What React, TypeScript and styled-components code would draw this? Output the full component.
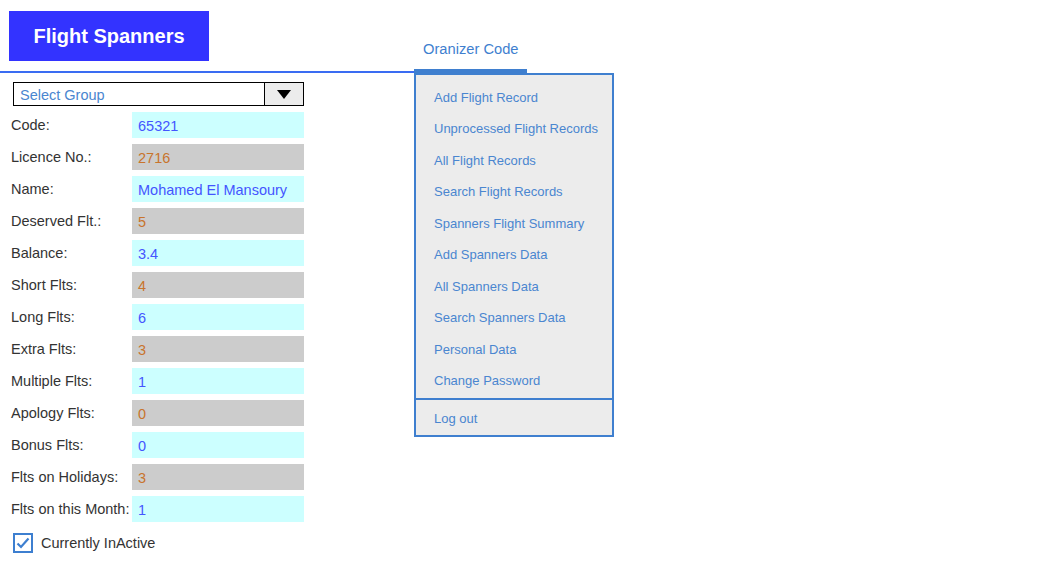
import * as React from 'react'
import styled, { createGlobalStyle } from 'styled-components'

const GlobalStyle = createGlobalStyle`
  body {
    margin: 0;
    background: #ffffff;
    font-family: "Liberation Sans", Arial, sans-serif;
  }
`

const Page = styled.div`
  display: flex;
  align-items: flex-start;
`

const LeftColumn = styled.div`
  width: 414px;
`

const Header = styled.div`
  height: 73px;
  border-bottom: 2px solid #3a6cf2;
  padding: 11px 0 0 9px;
  box-sizing: border-box;
`

const Title = styled.div`
  width: 200px;
  height: 50px;
  background: #3333ff;
  color: #ffffff;
  font-weight: bold;
  font-size: 20px;
  display: flex;
  align-items: center;
  justify-content: center;
`

const Form = styled.div`
  padding: 9px 0 0 11px;
  display: flex;
  flex-direction: column;
`

const Select = styled.div`
  margin-left: 2px;
  width: 291px;
  height: 24px;
  border: 1px solid #000;
  box-sizing: border-box;
  display: flex;
  align-items: stretch;
  margin-bottom: 6px;
`

const SelectText = styled.div`
  flex: 1;
  padding: 2px 0 0 6px;
  display: flex;
  align-items: center;
  font-size: 14.5px;
  color: #4a86d0;
`

const SelectButton = styled.div`
  width: 38px;
  border-left: 1px solid #000;
  background: #ececec;
  display: flex;
  align-items: center;
  justify-content: center;
`

const Rows = styled.div`
  display: flex;
  flex-direction: column;
  gap: 6px;
`

const Row = styled.div`
  display: flex;
  align-items: center;
  height: 26px;
`

const Label = styled.div`
  width: 121px;
  font-size: 14.5px;
  color: #333;
  white-space: nowrap;
`

const Field = styled.div<{ $readOnly?: boolean }>`
  width: 172px;
  height: 26px;
  box-sizing: border-box;
  padding: 2px 0 0 6px;
  display: flex;
  align-items: center;
  font-size: 14.5px;
  background: ${(p) => (p.$readOnly ? '#cccccc' : '#ccffff')};
  color: ${(p) => (p.$readOnly ? '#c8742c' : '#4455ff')};
`

const CheckRow = styled.label`
  display: flex;
  align-items: center;
  gap: 8px;
  margin: 11px 0 0 2px;
  font-size: 14.5px;
  color: #333;
`

const CheckBox = styled.span`
  width: 20px;
  height: 20px;
  box-sizing: border-box;
  border: 2px solid #3d7fd0;
  display: flex;
  align-items: center;
  justify-content: center;
`

const RightColumn = styled.div`
  width: 200px;
`

const Tab = styled.div`
  width: 113px;
  height: 73px;
  box-sizing: border-box;
  border-bottom: 4px solid #3f7fcf;
  padding: 0 0 12px 9px;
  display: flex;
  align-items: flex-end;
  font-size: 14.7px;
  color: #3f7fcf;
`

const Menu = styled.div`
  border: 2px solid #3f7fcf;
  background: #ececec;
`

const MenuList = styled.div`
  padding-top: 6px;
  padding-bottom: 2px;
  border-bottom: 2px solid #3f7fcf;
`

const MenuItem = styled.div<{ $tall?: boolean }>`
  height: ${(p) => (p.$tall ? '35px' : '31.5px')};
  padding: 1px 0 0 18px;
  box-sizing: border-box;
  display: flex;
  align-items: center;
  font-size: 13px;
  color: #4a86d0;
  cursor: pointer;
`

const fields: { label: string; value: string; readOnly?: boolean }[] = [
  { label: 'Code:', value: '65321' },
  { label: 'Licence No.:', value: '2716', readOnly: true },
  { label: 'Name:', value: 'Mohamed El Mansoury' },
  { label: 'Deserved Flt.:', value: '5', readOnly: true },
  { label: 'Balance:', value: '3.4' },
  { label: 'Short Flts:', value: '4', readOnly: true },
  { label: 'Long Flts:', value: '6' },
  { label: 'Extra Flts:', value: '3', readOnly: true },
  { label: 'Multiple Flts:', value: '1' },
  { label: 'Apology Flts:', value: '0', readOnly: true },
  { label: 'Bonus Flts:', value: '0' },
  { label: 'Flts on Holidays:', value: '3', readOnly: true },
  { label: 'Flts on this Month:', value: '1' },
]

const menuItems = [
  'Add Flight Record',
  'Unprocessed Flight Records',
  'All Flight Records',
  'Search Flight Records',
  'Spanners Flight Summary',
  'Add Spanners Data',
  'All Spanners Data',
  'Search Spanners Data',
  'Personal Data',
  'Change Password',
]

export default function App() {
  return (
    <>
      <GlobalStyle />
      <Page>
        <LeftColumn>
          <Header>
            <Title>Flight Spanners</Title>
          </Header>

          <Form>
            <Select>
              <SelectText>Select Group</SelectText>
              <SelectButton>
                <svg width="14" height="9" viewBox="0 0 14 9">
                  <path d="M0 0 H14 L7 9 Z" fill="#000" />
                </svg>
              </SelectButton>
            </Select>

            <Rows>
              {fields.map((f) => (
                <Row key={f.label}>
                  <Label>{f.label}</Label>
                  <Field $readOnly={f.readOnly}>{f.value}</Field>
                </Row>
              ))}
            </Rows>

            <CheckRow>
              <CheckBox>
                <svg width="14" height="12" viewBox="0 0 14 12">
                  <path d="M1.5 6.5 L5 10 L12.5 1.5" fill="none" stroke="#3d7fd0" strokeWidth="2.2" />
                </svg>
              </CheckBox>
              Currently InActive
            </CheckRow>
          </Form>
        </LeftColumn>

        <RightColumn>
          <Tab>Oranizer Code</Tab>
          <Menu>
            <MenuList>
              {menuItems.map((m) => (
                <MenuItem key={m}>{m}</MenuItem>
              ))}
            </MenuList>
            <MenuItem $tall>Log out</MenuItem>
          </Menu>
        </RightColumn>
      </Page>
    </>
  )
}
